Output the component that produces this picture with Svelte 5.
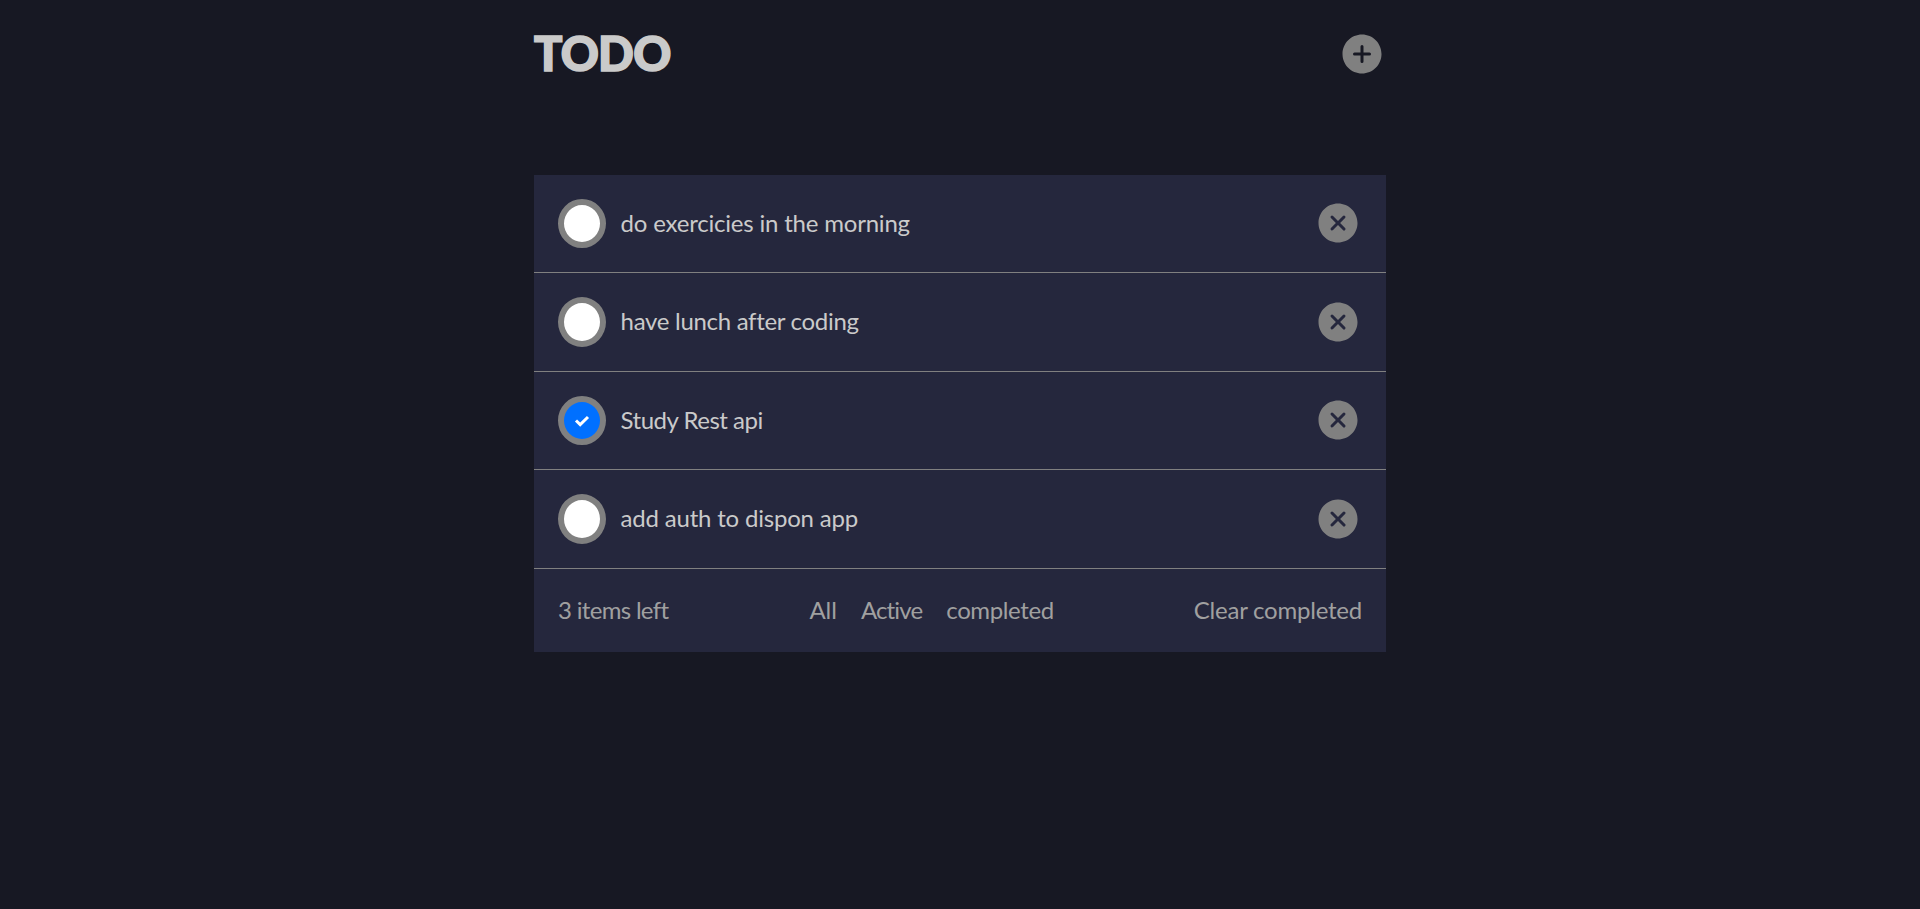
<script>
  let todos = $state([
    { text: 'do exercicies in the morning', done: false, spacing: -0.2 },
    { text: 'have lunch after coding', done: false, spacing: -0.3 },
    { text: 'Study Rest api', done: true, spacing: -0.49 },
    { text: 'add auth to dispon app', done: false, spacing: -0.2 }
  ]);
  let left = $derived(todos.filter((t) => !t.done).length);
</script>

<main>
  <header>
    <h1>TODO</h1>
    <svg class="icon" viewBox="0 0 512 512" aria-label="Add">
      <path d="M256 48C141.31 48 48 141.31 48 256s93.31 208 208 208 208-93.31 208-208S370.69 48 256 48zm80 224h-64v64a16 16 0 01-32 0v-64h-64a16 16 0 010-32h64v-64a16 16 0 0132 0v64h64a16 16 0 010 32z" />
    </svg>
  </header>

  <section>
    <ul>
      {#each todos as todo}
        <li>
          <button class="check" class:done={todo.done} aria-label="Toggle" onclick={() => (todo.done = !todo.done)}>
            {#if todo.done}
              <svg viewBox="0 0 16 14"><path d="M2 6.5 L6.2 10.6 L14 3" /></svg>
            {/if}
          </button>
          <span class="text" style:letter-spacing="{todo.spacing}px">{todo.text}</span>
          <svg class="icon" viewBox="0 0 512 512" aria-label="Remove">
            <path d="M256 48C141.31 48 48 141.31 48 256s93.31 208 208 208 208-93.31 208-208S370.69 48 256 48zm75.31 260.69a16 16 0 11-22.62 22.62L256 278.63l-52.69 52.68a16 16 0 01-22.62-22.62L233.37 256l-52.68-52.69a16 16 0 0122.62-22.62L256 233.37l52.69-52.68a16 16 0 0122.62 22.62L278.63 256z" />
          </svg>
        </li>
      {/each}
    </ul>
    <footer>
      <span class="count">{left} items left</span>
      <nav>
        <span class="all">All</span>
        <span class="active">Active</span>
        <span class="completed">completed</span>
      </nav>
      <span class="clear">Clear completed</span>
    </footer>
  </section>
</main>

<style>
  :global(body) {
    background: #171823;
  }
  main {
    box-sizing: border-box;
    width: 852px;
    margin: 0 auto;
    padding-top: 18px;
    font: 24px/30px Lato, sans-serif;
    color: #cacaca;
  }
  header {
    display: flex;
    justify-content: space-between;
    align-items: center;
    height: 72px;
    margin-bottom: 85px;
  }
  h1 {
    margin: 0 0 2px;
    font-size: 47px;
    line-height: 70px;
    font-weight: 900;
    letter-spacing: -0.7px;
    -webkit-text-stroke: 1.6px #cacaca;
  }
  .icon {
    flex: none;
    width: 48px;
    height: 48px;
    fill: #808080;
  }
  section {
    background: #25273d;
  }
  ul {
    list-style: none;
    margin: 0;
    padding: 0;
  }
  li {
    box-sizing: border-box;
    display: flex;
    height: 98px;
    padding: 24px;
    border-bottom: 1px solid #808080;
  }
  li:nth-child(even) {
    height: 99px;
  }
  li:nth-child(even) .icon {
    margin-top: 1px;
  }
  .check {
    box-sizing: border-box;
    display: flex;
    align-items: center;
    justify-content: center;
    width: 48px;
    margin: 0;
    padding: 0;
    border: 6px solid #808080;
    border-radius: 50%;
    background: #fff;
  }
  .check.done {
    background: #0070ff;
  }
  .check svg {
    width: 16px;
    height: 14px;
    fill: none;
    stroke: #fff;
    stroke-width: 3;
  }
  .text {
    flex: 1;
    align-self: center;
    margin-left: 14.6px;
    padding-bottom: 2px;
  }
  footer {
    box-sizing: border-box;
    display: flex;
    justify-content: space-between;
    align-items: center;
    height: 83px;
    padding: 0 24px 2px;
    color: #a0a0a0;
  }
  nav {
    display: flex;
    gap: 24px;
    margin-left: 1px;
  }
  .count {
    letter-spacing: -0.68px;
  }
  .active {
    letter-spacing: -0.85px;
  }
  .completed {
    letter-spacing: -0.38px;
  }
  .clear {
    letter-spacing: -0.23px;
  }
</style>
